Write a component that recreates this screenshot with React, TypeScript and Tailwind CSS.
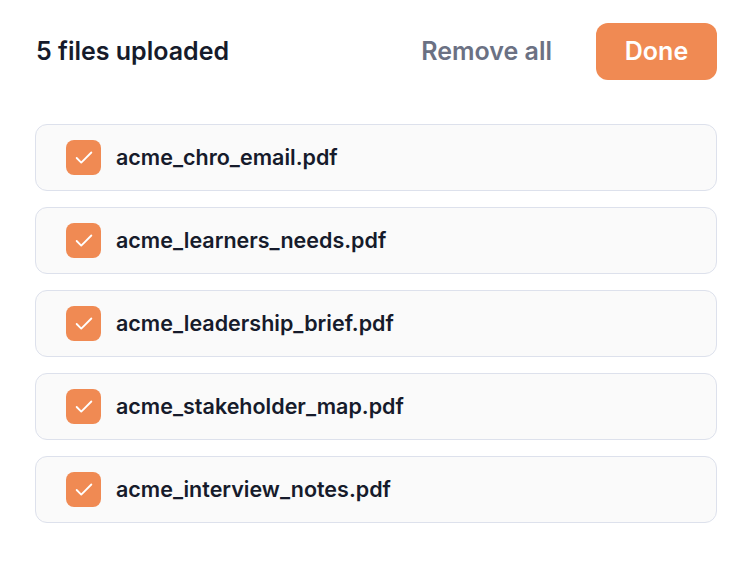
import { Check } from "lucide-react";

const files = [
  "acme_chro_email.pdf",
  "acme_learners_needs.pdf",
  "acme_leadership_brief.pdf",
  "acme_stakeholder_map.pdf",
  "acme_interview_notes.pdf",
];

export default function App() {
  return (
    <div className="min-h-screen bg-white px-[35px] pt-[23px] font-['Inter',sans-serif]">
      {/* Header */}
      <div className="flex items-center justify-between h-[57px]">
        <h1 className="pl-px text-[25px] font-semibold text-[#161b2b]">5 files uploaded</h1>
        <div className="flex items-center">
          <button className="text-[25px] font-semibold text-[#6b7183] mr-[44px]">Remove all</button>
          <button className="h-[57px] w-[121px] rounded-[12px] bg-[#f08a53] text-[25px] font-semibold text-white">
            Done
          </button>
        </div>
      </div>

      {/* File list */}
      <div className="mt-[44px] flex flex-col gap-[16px]">
        {files.map((f) => (
          <div
            key={f}
            className="flex h-[67px] items-center rounded-[12px] border border-[#dde1ec] bg-[#fafafa] pl-[30px]"
          >
            <div className="flex h-[35px] w-[35px] items-center justify-center rounded-[8px] bg-[#f08a53]">
              <Check className="h-[22px] w-[22px] text-white" strokeWidth={2} />
            </div>
            <span className="ml-[15px] text-[21.5px] font-semibold text-[#161b2b]">{f}</span>
          </div>
        ))}
      </div>
    </div>
  );
}
